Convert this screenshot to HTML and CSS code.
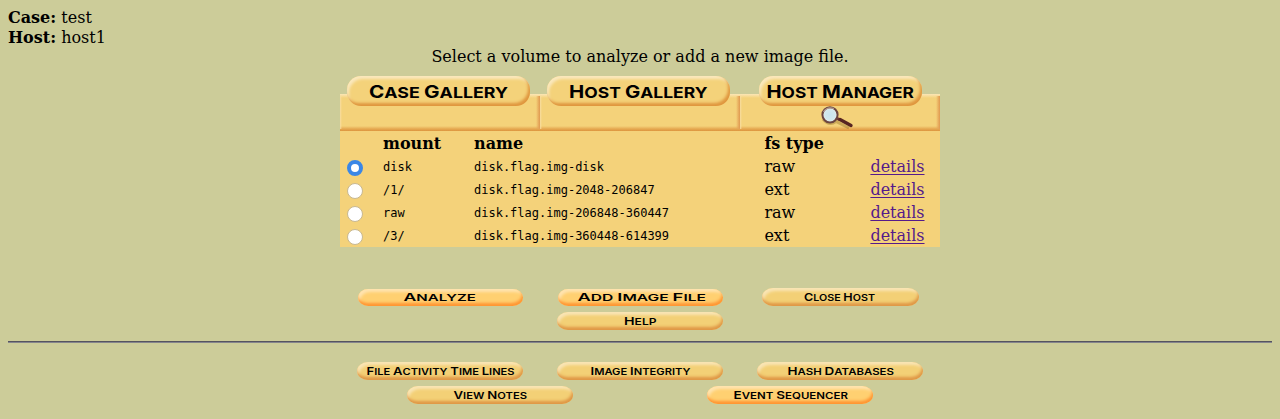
FILE: index.html
```html
<!DOCTYPE html>
<html lang="en">
<head>
<meta charset="utf-8">
<title>Open Image In test:host1</title>
<link rel="stylesheet" href="styles.css">
</head>
<body>
<header class="case"><div><b>Case:</b> test</div><div><b>Host:</b> host1</div></header>
<p class="prompt">Select a volume to analyze or add a new image file.</p>
<main class="panel">
  <nav class="tabs">
    <a class="tab"><span class="pill"><svg class="label" width="183" height="30"><text x="22" y="22" textLength="139" lengthAdjust="spacingAndGlyphs"><tspan class="cap">C</tspan>ASE <tspan class="cap">G</tspan>ALLERY</text></svg></span></a>
    <a class="tab"><span class="pill"><svg class="label" width="183" height="30"><text x="22" y="22" textLength="138.5" lengthAdjust="spacingAndGlyphs"><tspan class="cap">H</tspan>OST <tspan class="cap">G</tspan>ALLERY</text></svg></span></a>
    <a class="tab current"><span class="pill"><svg class="label" width="163" height="30"><text x="7.500" y="22" textLength="147.500" lengthAdjust="spacingAndGlyphs"><tspan class="cap">H</tspan>OST <tspan class="cap">M</tspan>ANAGER</text></svg></span>
      <svg class="lens" width="36" height="24" viewBox="0 0 36 24">
        <defs><radialGradient id="glass"><stop offset="0" stop-color="#c9e4ee"/><stop offset=".7" stop-color="#d3e8ec"/><stop offset="1" stop-color="#eef5f0"/></radialGradient></defs>
        <path class="shade" d="M3 13Q9 20.500 16 15.500L29 22"/>
        <path d="M15.500 11.500L20 14" stroke="#713a35" stroke-width="3"/>
        <path d="M20 13.500L31 19.500" stroke="#572522" stroke-width="3.400" stroke-linecap="round"/>
        <circle cx="10" cy="8.800" r="7.600" fill="url(#glass)" stroke="#6b4540" stroke-width="2"/>
        <path d="M3.500 6Q7 0 14 2.500" fill="none" stroke="#b19a90" stroke-width="1.200"/>
      </svg></a>
  </nav>
  <form class="volumes">
    <div class="row head"><span></span><span>mount</span><span>name</span><span>fs type</span><span></span></div>
    <div class="row"><input type="radio" name="vol" checked><tt>disk</tt><tt>disk.flag.img-disk</tt><span>raw</span><a href="#">details</a></div>
    <div class="row"><input type="radio" name="vol"><tt>/1/</tt><tt>disk.flag.img-2048-206847</tt><span>ext</span><a href="#">details</a></div>
    <div class="row"><input type="radio" name="vol"><tt>raw</tt><tt>disk.flag.img-206848-360447</tt><span>raw</span><a href="#">details</a></div>
    <div class="row"><input type="radio" name="vol"><tt>/3/</tt><tt>disk.flag.img-360448-614399</tt><span>ext</span><a href="#">details</a></div>
  </form>
</main>
<section class="actions">
  <div class="cell"><span class="btn bright short"><svg class="label small" width="165" height="17"><text x="45.500" y="11.500" textLength="72.500" lengthAdjust="spacingAndGlyphs"><tspan class="cap">A</tspan>NALYZE</text></svg></span></div>
  <div class="cell"><span class="btn bright short"><svg class="label small" width="165" height="17"><text x="19.500" y="11.500" textLength="128.500" lengthAdjust="spacingAndGlyphs"><tspan class="cap">A</tspan>DD <tspan class="cap">I</tspan>MAGE <tspan class="cap">F</tspan>ILE</text></svg></span></div>
  <div class="cell"><span class="btn narrow"><svg class="label small" width="157" height="18"><text x="42" y="13" textLength="71" lengthAdjust="spacingAndGlyphs"><tspan class="cap">C</tspan>LOSE <tspan class="cap">H</tspan>OST</text></svg></span></div>
  <div class="cell second"><span class="btn"><svg class="label small" width="166" height="18"><text x="67" y="13" textLength="32.500" lengthAdjust="spacingAndGlyphs"><tspan class="cap">H</tspan>ELP</text></svg></span></div>
</section>
<hr class="rule">
<section class="tools">
  <div class="line">
    <span class="btn"><svg class="label small" width="166" height="18"><text x="9.500" y="13" textLength="148" lengthAdjust="spacingAndGlyphs"><tspan class="cap">F</tspan>ILE <tspan class="cap">A</tspan>CTIVITY <tspan class="cap">T</tspan>IME <tspan class="cap">L</tspan>INES</text></svg></span>
    <span class="btn"><svg class="label small" width="166" height="18"><text x="33.500" y="13" textLength="100" lengthAdjust="spacingAndGlyphs"><tspan class="cap">I</tspan>MAGE <tspan class="cap">I</tspan>NTEGRITY</text></svg></span>
    <span class="btn"><svg class="label small" width="166" height="18"><text x="30.500" y="13" textLength="106.500" lengthAdjust="spacingAndGlyphs"><tspan class="cap">H</tspan>ASH <tspan class="cap">D</tspan>ATABASES</text></svg></span>
  </div>
  <div class="line">
    <span class="btn"><svg class="label small" width="166" height="18"><text x="46.500" y="13" textLength="73.500" lengthAdjust="spacingAndGlyphs"><tspan class="cap">V</tspan>IEW <tspan class="cap">N</tspan>OTES</text></svg></span>
    <span class="btn bright"><svg class="label small" width="166" height="18"><text x="26.500" y="13" textLength="114.500" lengthAdjust="spacingAndGlyphs"><tspan class="cap">E</tspan>VENT <tspan class="cap">S</tspan>EQUENCER</text></svg></span>
  </div>
</section>
</body>
</html>
```

FILE: styles.css
```css
* { box-sizing: border-box; }
html { overflow: hidden; }
body { margin: 8px; background: #cccc99; color: #000; font: 16px/19px "DejaVu Serif", serif; }
.case { display: flex; flex-direction: column; gap: 1px; }
.prompt { margin: 0; text-align: center; }
.panel { width: 600px; margin: 10px auto 0; }
.tabs { display: flex; height: 55px; }
.tab {
  width: 200px; display: flex; flex-direction: column; align-items: center; padding-right: 3px;
  background: linear-gradient(to right, #f8dda0, transparent 2px, transparent 196px, #e5a559 199px, #df9950) 0 20px / 100% 33px no-repeat,
    linear-gradient(to bottom, transparent 18px, #fbe6b6 18px, #f4d27a 22px, #f4d27a 50px, #e5a750 53px, #dc963f 55px);
}
.tab.current { padding-right: 0; padding-left: 1px; }
.pill {
  height: 30px; border-radius: 14px; background: #f4d27a; overflow: hidden; flex: none;
  box-shadow: inset -2px -3px 3px #df963e, inset 2px 3px 3px #fae8bd;
}
.label { display: block; font: 700 15px Inter, sans-serif; }
.label .cap { font-size: 17.5px; }
.label.small { font-size: 9.2px; font-weight: 600; }
.label.small .cap { font-size: 10.8px; }
.lens { margin: 0 0 0 -6px; flex: none; }
.lens .shade { fill: none; stroke: #80601b; stroke-opacity: .35; stroke-width: 3; }
.volumes { margin: 0; background: #f4d27a; }
.row { display: grid; grid-template-columns: 43px 91px 290.4px 106px 1fr; height: 23px; line-height: 23px; }
.row.head { height: 24px; line-height: 26px; font-weight: bold; }
.row tt { font: 12px/25px "DejaVu Sans Mono", monospace; }
.row a { color: #551a8b; justify-self: start; text-decoration-thickness: 1px; text-underline-offset: 2px; text-decoration-skip-ink: none; }
.row input {
  appearance: none; width: 16px; height: 16px; margin: 5px 0 0 7px; border-radius: 50%;
  background: #fff; border: 1px solid #c8b891;
}
.row input:checked { border: 4px solid #3b87e6; }
.actions { display: grid; grid-template-columns: repeat(3, 200px); grid-template-rows: 24px 18px; width: 600px; margin: 41px auto 0; }
.cell { display: flex; justify-content: center; align-items: flex-start; }
.cell.second { grid-column: 2; }
.btn {
  display: block; width: 166px; height: 18px; border-radius: 11px / 9px; background: #f3d076; overflow: hidden;
  box-shadow: inset -1px -3px 3px #df9746, inset 2px 3px 3px #f9e5b5;
}
.bright { background: #ffd071; box-shadow: inset -1px -3px 3px #ff9532, inset 2px 3px 3px #ffe4b0; }
.short { width: 165px; height: 17px; margin-top: .5px; }
.narrow { width: 157px; }
.rule { margin: 11px 0 0; border: 0; height: 2px; background: linear-gradient(#55535f 50%, #85858c 50%); }
.tools { width: 600px; margin: 19px auto 0; }
.line { display: flex; justify-content: space-around; height: 24px; }
```
